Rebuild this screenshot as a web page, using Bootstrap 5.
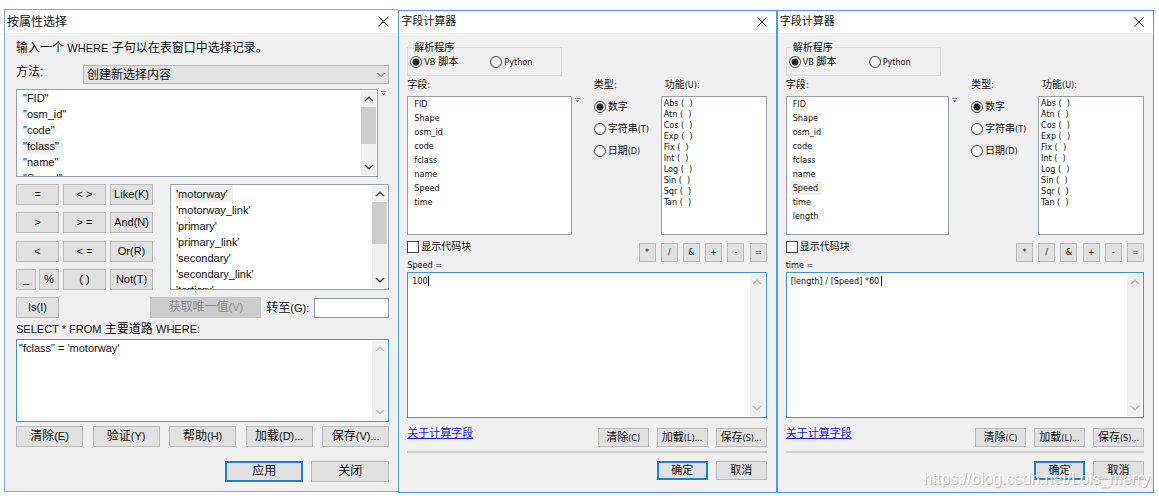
<!DOCTYPE html>
<html lang="zh-CN">
<head>
<meta charset="utf-8">
<meta name="viewport" content="width=device-width, initial-scale=1">
<title>字段计算器</title>
<link href="https://cdn.jsdelivr.net/npm/bootstrap@5.3.0/dist/css/bootstrap.min.css" rel="stylesheet">
<style>
  body { background: #fff; color: #111; }
  .desk { position: relative; padding: 9px 5px 0 4px; }
  .dlg { background: #f0f0f0; min-width: 0; }
  .dlg-select { flex: 395 1 0; border: 1px solid #84a9dc; border-right: 0; font: 12px/14px "Liberation Sans", "Noto Sans CJK SC", sans-serif; --lat: 11px; }
  .dlg-calc { flex: 378 1 0; margin-top: 1px; border: 1px solid #4f9bdf; font: 11px/14px "DejaVu Sans Condensed", "DejaVu Sans", "Noto Sans CJK SC", sans-serif; --lat: 9px; }
  .dlg-last { flex-grow: 377; }
  .dlg-select, .dlg-calc { box-sizing: border-box; width: 0; }
  .lat { font-size: var(--lat); }
  .titlebar { background: #fff; height: 22px; padding: 0 9px 0 2px; }
  .dlg-select .titlebar { height: 23px; }
  .titlebar h1 { font-size: inherit; line-height: 20px; font-weight: 400; margin: 0; }
  .closer { border: 0; background: none; padding: 0; line-height: 0; }
  .dlg-select .content { padding: 8px 9px 9px 11px; }
  .dlg-calc .content { padding: 8px 9px 12px 8px; }

  .dlg .btn { --bs-btn-padding-x: 0; --bs-btn-padding-y: 0; --bs-btn-border-radius: 0; --bs-btn-font-size: inherit; --bs-btn-color: #111;
    --bs-btn-bg: #e1e1e1; --bs-btn-border-color: #b9b9b9; --bs-btn-disabled-bg: #ccc; --bs-btn-disabled-border-color: #c4c4c4; --bs-btn-disabled-color: #8a8a8a; --bs-btn-disabled-opacity: 1;
    font-family: inherit; line-height: 17px; height: 21px; white-space: nowrap; }
  .dlg-calc .btn { height: 19px; line-height: 15px; width: 51px; }
  .dlg .btn.primary { border: 2px solid #1a7fd8; line-height: 15px; }
  .dlg-calc .btn.primary { line-height: 13px; }
  .dlg-calc .ops .btn { width: 17px; }
  .ops { width: 128px; padding-top: 8px; }

  .dlg .form-select { height: 19px; padding: 0 20px 0 3px; border: 1px solid #b4b4b4; border-radius: 0; font: inherit; line-height: 16px; color: #111; background-color: #e3e3e3;
    background-image: url("data:image/svg+xml,%3Csvg xmlns='http://www.w3.org/2000/svg' viewBox='0 0 8 8'%3E%3Cpath d='M.5 2 4 5.500 7.500 2' fill='none' stroke='%23555'/%3E%3C/svg%3E"); background-size: 8px 8px; background-position: right 3px center; }
  .caption { width: 67px; }

  .listing { background: #fff; border: 1px solid #9a9ea8; overflow: hidden; display: flex; font-size: var(--lat); }
  .listing ul { margin: 0; padding: 0 0 0 4px; list-style: none; flex: 1; min-width: 0; }
  .listing li { width: fit-content; padding: 0 4px 0 2px; line-height: 16px; white-space: pre; }
  .listing li[aria-selected] { background: #f0f0f0; }
  .fields { height: 88px; flex: 1; }
  .values { flex: 1; height: 106px; margin-left: 17px; }
  .values ul { padding-top: 1px; }
  .values li { padding-left: 1px; padding-right: 5px; }
  .calc-list { height: 139px; }
  .calc-list li { line-height: 14px; }
  .funcs ul { padding-left: 0; }
  .funcs li { line-height: 11px; }
  .calc-list.funcs ul { padding-top: 1px; }
  .vbar { width: 15px; flex: none; background: #f0f0f0; color: #444; display: flex; flex-direction: column; align-items: center; margin: 1px; }
  .vbar.idle { color: #bbb; }
  .vbar svg { flex: none; margin: 5px 0; }
  .vbar i { width: 15px; background: #cdcdcd; }
  .vbar svg:last-child { margin-top: auto; }
  .thumb-a { height: 37px; } .thumb-b { height: 42px; }
  .sorter { width: 11px; padding: 2px 0 0 3px; line-height: 0; }

  .keys { display: grid; grid-template-columns: repeat(3, 43px); column-gap: 4px; align-content: space-between; height: 106px; }
  .keys .btn, .w-key { width: 43px; font-size: 11px; }
  .keys .half .btn { width: 20px; }
  .w-get { width: 111px; }
  .goto-label { padding: 0 5px; }
  .w-act { width: 67px; }
  .w-end { width: 78px; }
  .dlg .form-control { border-radius: 0; border: 1px solid #8f939c; padding: 0; background: #fff; color: #111; min-height: 0; }
  .goto { width: 75px; height: 20px; }
  .sql { line-height: 19px; padding-top: 2px; }
  .editor { position: relative; display: flex; background: #fff; border: 1px solid #3f93da; }
  .dlg .editor .form-control { border: 0; resize: none; font: inherit; font-size: var(--lat); line-height: 16px; padding: 0 2px; overflow: hidden; }
  .dlg-select .editor { height: 83px; }
  .dlg-calc .editor { height: 146px; }
  .dlg-calc .editor .form-control { padding-left: 4px; }
  .caret { position: absolute; top: 3px; width: 1px; height: 10px; background: #111; }

  fieldset { width: 155px; border: 1px solid #dcdcdc; padding: 2px 2px 7px; margin: 0; }
  legend { float: none; width: auto; margin: 0 0 0 2px; padding: 0 2px; font-size: 10px; line-height: 13px; }
  .vb { width: 80px; }
  .dlg .form-check-input { width: 12px; height: 12px; margin: 0; flex: none; border: 1px solid #444; background: #fff; }
  .dlg .form-check-input[type=checkbox] { border-radius: 0; }
  .dlg .form-check-input[type=radio]:checked { background: radial-gradient(circle, #222 3px, #fff 4px); }
  .choice { display: flex; align-items: center; gap: 2px; line-height: 12px; white-space: nowrap; }
  .panes { display: grid; grid-template-columns: minmax(0, 1fr) 22px 67px 106px; grid-template-rows: 20px auto; }
  .panes > .small-cjk { line-height: 18px; }
  .panes .choice { height: 22px; }
  .small-cjk { font-size: 10px; }
  .target { line-height: 14px; margin-top: 5px; }
  .dlg a { color: #1717f0; line-height: 12px; }
  .rule { border: 0; border-top: 2px solid #cfcfcf; opacity: 1; margin: 4px 0 8px; }
  .watermark { position: absolute; right: 9px; bottom: 4px; font: 16px/20px "Liberation Sans", sans-serif; color: #fff; opacity: .85; text-shadow: 1px 1px 1px #aaa; pointer-events: none; white-space: nowrap; }
</style>
</head>
<body>
<svg width="0" height="0" class="position-absolute" aria-hidden="true">
  <symbol id="up" viewBox="0 0 10 6"><path d="M1 5 5 1.200 9 5" fill="none" stroke="currentColor" stroke-width="1.500"/></symbol>
  <symbol id="down" viewBox="0 0 10 6"><path d="M1 1 5 4.800 9 1" fill="none" stroke="currentColor" stroke-width="1.500"/></symbol>
  <symbol id="x" viewBox="0 0 10 10"><path d="M.5.5l9 9M9.500.5l-9 9" fill="none" stroke="#222"/></symbol>
  <symbol id="sort" viewBox="0 0 5 5"><path d="M0 .5h5" stroke="#888"/><path d="M1 2.500h3L2.500 4.500z" fill="#111"/></symbol>
</svg>

<main class="desk d-flex align-items-start">

  <section class="dlg dlg-select">
    <header class="titlebar d-flex justify-content-between align-items-center">
      <h1>按属性选择</h1>
      <button class="closer" aria-label="关闭窗口"><svg width="11" height="11"><use href="#x"/></svg></button>
    </header>
    <div class="content">
      <div>输入一个 <span class="lat">WHERE</span> 子句以在表窗口中选择记录。</div>
      <div class="d-flex" style="margin-top:10px">
        <label class="caption flex-shrink-0" for="method">方法:</label>
        <select id="method" class="form-select"><option>创建新选择内容</option></select>
      </div>
      <div class="d-flex" style="margin-top:5px">
        <div class="listing fields">
          <ul role="listbox" aria-label="字段">
            <li role="option">"FID"</li><li role="option">"osm_id"</li><li role="option">"code"</li><li role="option" aria-selected="true">"fclass"</li><li role="option">"name"</li><li role="option">"Speed"</li>
          </ul>
          <div class="vbar"><svg width="10" height="6"><use href="#up"/></svg><i class="thumb-a"></i><svg width="10" height="6"><use href="#down"/></svg></div>
        </div>
        <div class="sorter"><svg width="5" height="5"><use href="#sort"/></svg></div>
      </div>
      <div class="d-flex" style="margin-top:7px">
        <div class="keys">
          <button class="btn">=</button><button class="btn">&lt; &gt;</button><button class="btn">Like(K)</button>
          <button class="btn">&gt;</button><button class="btn">&gt; =</button><button class="btn">And(N)</button>
          <button class="btn">&lt;</button><button class="btn">&lt; =</button><button class="btn">Or(R)</button>
          <div class="half d-flex justify-content-between"><button class="btn">_</button><button class="btn">%</button></div><button class="btn">( )</button><button class="btn">Not(T)</button>
        </div>
        <div class="listing values">
          <ul role="listbox" aria-label="唯一值">
            <li role="option" aria-selected="true">'motorway'</li><li role="option">'motorway_link'</li><li role="option">'primary'</li><li role="option">'primary_link'</li><li role="option">'secondary'</li><li role="option">'secondary_link'</li><li role="option">'tertiary'</li>
          </ul>
          <div class="vbar"><svg width="10" height="6"><use href="#up"/></svg><i class="thumb-b"></i><svg width="10" height="6"><use href="#down"/></svg></div>
        </div>
      </div>
      <div class="d-flex align-items-center" style="margin-top:7px">
        <button class="btn w-key me-auto">Is(I)</button>
        <button class="btn w-get" disabled>获取唯一值<span class="lat">(V)</span></button>
        <label for="goto" class="goto-label">转至<span class="lat">(G):</span></label>
        <input id="goto" class="form-control goto">
      </div>
      <label for="where" class="d-block sql"><span class="lat">SELECT * FROM</span> 主要道路 <span class="lat">WHERE:</span></label>
      <div class="editor">
        <textarea id="where" class="form-control" spellcheck="false">"fclass" = 'motorway'</textarea>
        <div class="vbar idle"><svg width="10" height="6"><use href="#up"/></svg><svg width="10" height="6"><use href="#down"/></svg></div>
      </div>
      <div class="d-flex justify-content-between mt-1">
        <button class="btn w-act">清除<span class="lat">(E)</span></button><button class="btn w-act">验证<span class="lat">(Y)</span></button><button class="btn w-act">帮助<span class="lat">(H)</span></button><button class="btn w-act">加载<span class="lat">(D)...</span></button><button class="btn w-act">保存<span class="lat">(V)...</span></button>
      </div>
      <div class="d-flex justify-content-end gap-2" style="margin-top:14px">
        <button class="btn primary w-end">应用</button><button class="btn w-end">关闭</button>
      </div>
    </div>
  </section>

  <section class="dlg dlg-calc">
    <header class="titlebar d-flex justify-content-between align-items-center">
      <h1>字段计算器</h1>
      <button class="closer" aria-label="关闭窗口"><svg width="10" height="10"><use href="#x"/></svg></button>
    </header>
    <div class="content">
      <fieldset><legend>解析程序</legend>
        <div class="d-flex">
          <label class="choice vb"><input class="form-check-input" type="radio" name="parser1" checked><span class="small-cjk"><span class="lat">VB</span> 脚本</span></label>
          <label class="choice"><input class="form-check-input" type="radio" name="parser1"><span class="lat">Python</span></label>
        </div>
      </fieldset>
      <div class="panes">
        <div class="small-cjk">字段:</div><div></div><div class="small-cjk">类型:</div><div class="small-cjk ps-1">功能<span class="lat">(U):</span></div>
        <div class="listing calc-list"><ul role="listbox" aria-label="字段">
          <li role="option">FID</li><li role="option">Shape</li><li role="option">osm_id</li><li role="option">code</li><li role="option">fclass</li><li role="option">name</li><li role="option">Speed</li><li role="option">time</li>
        </ul></div>
        <div class="sorter"><svg width="5" height="5"><use href="#sort"/></svg></div>
        <div>
          <label class="choice"><input class="form-check-input" type="radio" name="kind1" checked><span class="small-cjk">数字</span></label>
          <label class="choice"><input class="form-check-input" type="radio" name="kind1"><span class="small-cjk">字符串<span class="lat">(T)</span></span></label>
          <label class="choice"><input class="form-check-input" type="radio" name="kind1"><span class="small-cjk">日期<span class="lat">(D)</span></span></label>
        </div>
        <div class="listing calc-list funcs"><ul role="listbox" aria-label="功能">
          <li role="option">Abs (  )</li><li role="option">Atn (  )</li><li role="option">Cos (  )</li><li role="option">Exp (  )</li><li role="option">Fix (  )</li><li role="option">Int (  )</li><li role="option">Log (  )</li><li role="option">Sin (  )</li><li role="option">Sqr (  )</li><li role="option">Tan (  )</li>
        </ul></div>
      </div>
      <div class="d-flex justify-content-between">
        <div style="padding-top:6px">
          <label class="choice"><input class="form-check-input" type="checkbox"><span class="small-cjk">显示代码块</span></label>
          <label class="target lat d-block" for="expr1">Speed =</label>
        </div>
        <div class="ops lat d-flex justify-content-between"><button class="btn">*</button><button class="btn">/</button><button class="btn">&amp;</button><button class="btn">+</button><button class="btn">-</button><button class="btn">=</button></div>
      </div>
      <div class="editor">
        <textarea id="expr1" class="form-control" spellcheck="false">100</textarea><span class="caret" style="left:20px"></span>
        <div class="vbar idle"><svg width="10" height="6"><use href="#up"/></svg><svg width="10" height="6"><use href="#down"/></svg></div>
      </div>
      <div class="d-flex gap-2" style="margin-top:10px">
        <a href="#" class="me-auto">关于计算字段</a>
        <button class="btn">清除<span class="lat">(C)</span></button><button class="btn">加载<span class="lat">(L)...</span></button><button class="btn">保存<span class="lat">(S)...</span></button>
      </div>
      <hr class="rule">
      <div class="d-flex justify-content-end gap-2"><button class="btn primary">确定</button><button class="btn">取消</button></div>
    </div>
  </section>

  <section class="dlg dlg-calc dlg-last">
    <header class="titlebar d-flex justify-content-between align-items-center">
      <h1>字段计算器</h1>
      <button class="closer" aria-label="关闭窗口"><svg width="10" height="10"><use href="#x"/></svg></button>
    </header>
    <div class="content">
      <fieldset><legend>解析程序</legend>
        <div class="d-flex">
          <label class="choice vb"><input class="form-check-input" type="radio" name="parser2" checked><span class="small-cjk"><span class="lat">VB</span> 脚本</span></label>
          <label class="choice"><input class="form-check-input" type="radio" name="parser2"><span class="lat">Python</span></label>
        </div>
      </fieldset>
      <div class="panes">
        <div class="small-cjk">字段:</div><div></div><div class="small-cjk">类型:</div><div class="small-cjk ps-1">功能<span class="lat">(U):</span></div>
        <div class="listing calc-list"><ul role="listbox" aria-label="字段">
          <li role="option">FID</li><li role="option">Shape</li><li role="option">osm_id</li><li role="option">code</li><li role="option">fclass</li><li role="option">name</li><li role="option" aria-selected="true">Speed</li><li role="option">time</li><li role="option">length</li>
        </ul></div>
        <div class="sorter"><svg width="5" height="5"><use href="#sort"/></svg></div>
        <div>
          <label class="choice"><input class="form-check-input" type="radio" name="kind2" checked><span class="small-cjk">数字</span></label>
          <label class="choice"><input class="form-check-input" type="radio" name="kind2"><span class="small-cjk">字符串<span class="lat">(T)</span></span></label>
          <label class="choice"><input class="form-check-input" type="radio" name="kind2"><span class="small-cjk">日期<span class="lat">(D)</span></span></label>
        </div>
        <div class="listing calc-list funcs"><ul role="listbox" aria-label="功能">
          <li role="option">Abs (  )</li><li role="option">Atn (  )</li><li role="option">Cos (  )</li><li role="option">Exp (  )</li><li role="option">Fix (  )</li><li role="option">Int (  )</li><li role="option">Log (  )</li><li role="option">Sin (  )</li><li role="option">Sqr (  )</li><li role="option">Tan (  )</li>
        </ul></div>
      </div>
      <div class="d-flex justify-content-between">
        <div style="padding-top:6px">
          <label class="choice"><input class="form-check-input" type="checkbox"><span class="small-cjk">显示代码块</span></label>
          <label class="target lat d-block" for="expr2">time =</label>
        </div>
        <div class="ops lat d-flex justify-content-between"><button class="btn">*</button><button class="btn">/</button><button class="btn">&amp;</button><button class="btn">+</button><button class="btn">-</button><button class="btn">=</button></div>
      </div>
      <div class="editor">
        <textarea id="expr2" class="form-control" spellcheck="false">[length] / [Speed] *60</textarea><span class="caret" style="left:94px"></span>
        <div class="vbar idle"><svg width="10" height="6"><use href="#up"/></svg><svg width="10" height="6"><use href="#down"/></svg></div>
      </div>
      <div class="d-flex gap-2" style="margin-top:10px">
        <a href="#" class="me-auto">关于计算字段</a>
        <button class="btn">清除<span class="lat">(C)</span></button><button class="btn">加载<span class="lat">(L)...</span></button><button class="btn">保存<span class="lat">(S)...</span></button>
      </div>
      <hr class="rule">
      <div class="d-flex justify-content-end gap-2"><button class="btn primary">确定</button><button class="btn">取消</button></div>
    </div>
  </section>

  <div class="watermark">https://blog.csdn.net/Lois_merry</div>
</main>
<script src="https://cdn.jsdelivr.net/npm/bootstrap@5.3.0/dist/js/bootstrap.bundle.min.js"></script>
</body>
</html>
